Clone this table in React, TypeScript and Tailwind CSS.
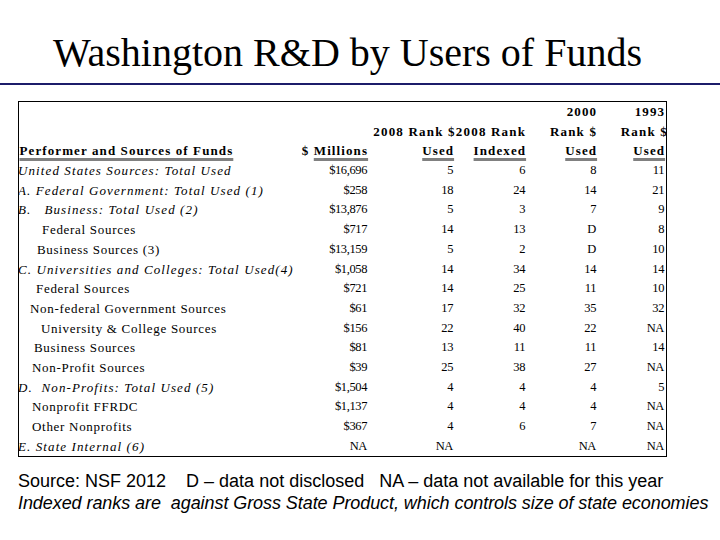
import React from "react";

const COLS = "grid grid-cols-[280px_68px_86px_72px_71px_68px] h-[19.7px] leading-[19.7px]";

type Row = {
  label: string;
  italic?: boolean;
  indent?: string;
  vals: string[];
};

const rows: Row[] = [
  { label: "United States Sources: Total Used", italic: true, vals: ["$16,696", "5", "6", "8", "11"] },
  { label: "A. Federal Government: Total Used (1)", italic: true, vals: ["$258", "18", "24", "14", "21"] },
  { label: "B.   Business: Total Used (2)", italic: true, vals: ["$13,876", "5", "3", "7", "9"] },
  { label: "Federal Sources", indent: "pl-[23px]", vals: ["$717", "14", "13", "D", "8"] },
  { label: "Business Sources (3)", indent: "pl-[18px]", vals: ["$13,159", "5", "2", "D", "10"] },
  { label: "C. Universities and Colleges: Total Used(4)", italic: true, vals: ["$1,058", "14", "34", "14", "14"] },
  { label: "Federal Sources", indent: "pl-[17px]", vals: ["$721", "14", "25", "11", "10"] },
  { label: "Non-federal Government Sources", indent: "pl-[11px]", vals: ["$61", "17", "32", "35", "32"] },
  { label: "University & College Sources", indent: "pl-[22px]", vals: ["$156", "22", "40", "22", "NA"] },
  { label: "Business Sources", indent: "pl-[15px]", vals: ["$81", "13", "11", "11", "14"] },
  { label: "Non-Profit Sources", indent: "pl-[13px]", vals: ["$39", "25", "38", "27", "NA"] },
  { label: "D.  Non-Profits: Total Used (5)", italic: true, vals: ["$1,504", "4", "4", "4", "5"] },
  { label: "Nonprofit FFRDC", indent: "pl-[13px]", vals: ["$1,137", "4", "4", "4", "NA"] },
  { label: "Other Nonprofits", indent: "pl-[13px]", vals: ["$367", "4", "6", "7", "NA"] },
  { label: "E. State Internal (6)", italic: true, vals: ["NA", "NA", "", "NA", "NA"] },
];

const UL = "underline decoration-[#808080] decoration-3 underline-offset-[3px]";

export default function App() {
  return (
    <div className="w-[720px] h-[540px] bg-white overflow-hidden text-black">
      <div className="h-[83px] pt-[32.5px] pl-[53px] font-['Liberation_Serif',serif] text-[40px] leading-[40px] whitespace-nowrap">
        Washington R&amp;D by Users of Funds
      </div>
      <div className="h-[2px] bg-[#1c1c6a]" />
      <div className="mt-[16px] ml-[18px] w-[649px] border-[1.5px] border-black overflow-hidden font-['Liberation_Serif',serif] text-[13px]">
        {/* header line 0 */}
        <div className={`${COLS} font-bold tracking-[1.1px]`}>
          <div />
          <div />
          <div />
          <div />
          <div className="text-right -mr-[1.1px]">2000</div>
          <div className="text-right -mr-[1.1px]">1993</div>
        </div>
        {/* header line 1 */}
        <div className={`${COLS} font-bold tracking-[1.2px]`}>
          <div />
          <div />
          <div className="col-span-2 text-right whitespace-nowrap -mr-[1.2px]">2008 Rank $2008 Rank</div>
          <div className="text-right whitespace-nowrap -mr-[1.2px]">Rank $</div>
          <div className="text-right whitespace-nowrap -mr-[4px]">Rank $</div>
        </div>
        {/* header line 2 */}
        <div className={`${COLS} font-bold tracking-[1.1px]`}>
          <div className="pl-[0.5px] whitespace-nowrap">
            <span className={UL}>Performer and Sources of Funds</span>
          </div>
          <div className="text-right whitespace-nowrap -mr-[1.1px]">
            $ <span className={UL}>Millions</span>
          </div>
          <div className="text-right -mr-[1.1px]">
            <span className={UL}>Used</span>
          </div>
          <div className="text-right -mr-[1.1px]">
            <span className={UL}>Indexed</span>
          </div>
          <div className="text-right -mr-[1.1px]">
            <span className={UL}>Used</span>
          </div>
          <div className="text-right -mr-[1.1px]">
            <span className={UL}>Used</span>
          </div>
        </div>
        {rows.map((r, i) => (
          <div key={i} className={COLS}>
            <div
              className={`whitespace-pre ${
                r.italic ? "italic tracking-[1.1px] -ml-[1px]" : `tracking-[0.7px] ${r.indent ?? ""}`
              }`}
            >
              {r.label}
            </div>
            {r.vals.map((v, j) => (
              <div key={j} className="text-right text-[12.5px] tracking-[-0.4px]">
                {v}
              </div>
            ))}
          </div>
        ))}
      </div>
      <div className="mt-[13px] pl-[18px] font-['Liberation_Sans',Arial,sans-serif] text-[18px] leading-[22px] whitespace-pre">
        <div>Source: NSF 2012    D – data not disclosed   NA – data not available for this year</div>
        <div className="italic tracking-[-0.07px]">Indexed ranks are  against Gross State Product, which controls size of state economies</div>
      </div>
    </div>
  );
}
